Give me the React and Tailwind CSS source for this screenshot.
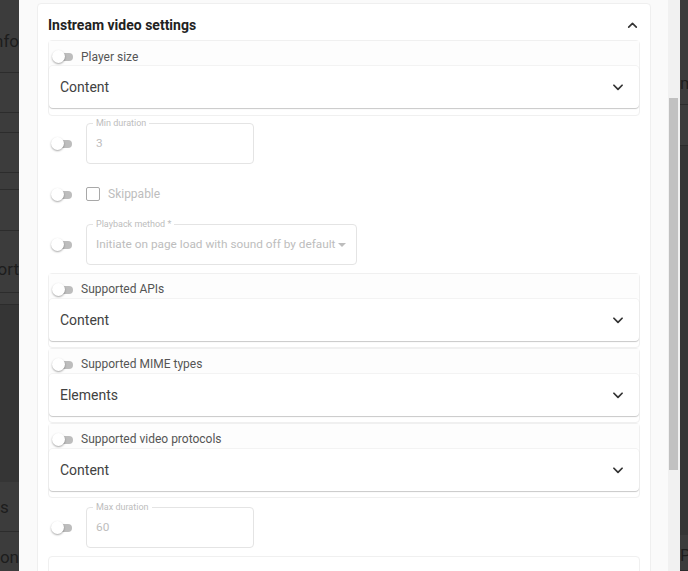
import React from 'react';

const font = { fontFamily: 'Roboto, "Liberation Sans", sans-serif' };

function Toggle() {
    return (
        <div className="relative w-[21px] h-[13px] shrink-0">
            <div className="absolute left-[3px] top-[3px] w-[18px] h-[8px] rounded-full bg-[#bdbdbd]"></div>
            <div className="absolute left-0 top-0 w-[13px] h-[13px] rounded-full bg-white shadow-[0_1px_2px_rgba(0,0,0,0.35)]"></div>
        </div>
    );
}

function ChevronDown() {
    return (
        <svg className="w-[14px] h-[14px] text-[#333]" viewBox="0 0 24 24" fill="none" stroke="currentColor" strokeWidth="3" strokeLinecap="round" strokeLinejoin="round">
            <path d="M5 9l7 7 7-7" />
        </svg>
    );
}

function SelectCard({ label, value, first }) {
    return (
        <div className={`rounded-[4px] border border-[#f0f0f0] bg-white ${first ? 'pb-[7px]' : 'pb-[6px]'}`}>
            <div className={`flex items-center gap-[8px] pl-[3px] bg-[#fdfdfd] ${first ? 'h-[24px] pt-[7px]' : 'h-[24px] pt-[6px]'}`}>
                <Toggle />
                <span className="text-[12px] text-[#555]">{label}</span>
            </div>
            <div className="h-[43px] flex items-center justify-between pl-[11px] pr-[14px] bg-white rounded-[4px] border-t border-[#f3f3f3] shadow-[0_1px_1px_rgba(0,0,0,0.22)]">
                <span className="text-[14px] text-[#424242]">{value}</span>
                <ChevronDown />
            </div>
        </div>
    );
}

function OutlinedField({ label, value, width, arrow }) {
    return (
        <div className={`relative h-[41px] rounded-[4px] border border-[#e4e4e4] flex items-center pl-[9px] pr-[9px] ${width}`}>
            <span className="absolute -top-[7px] left-[6px] bg-white px-[3px] text-[9px] text-[#bdbdbd] whitespace-nowrap">{label}</span>
            <span className="text-[11.8px] text-[#bdbdbd] flex-1 whitespace-nowrap">{value}</span>
            {arrow && (
                <svg className="w-[10px] h-[10px] text-[#bdbdbd] shrink-0" viewBox="0 0 10 10" fill="currentColor">
                    <path d="M1 3h8L5 7z" />
                </svg>
            )}
        </div>
    );
}

function SideRow({ text, h, pad = '', align = 'right' }) {
    return (
        <div className={`shrink-0 border-b border-[#2c2c2c] flex items-center ${h} ${pad} ${align === 'right' ? 'justify-end' : 'justify-start'}`}>
            {text && <span className="text-[17px] text-[#1d1d1d] whitespace-nowrap">{text}</span>}
        </div>
    );
}

export default function App() {
    return (
        <div className="w-[688px] h-[571px] overflow-hidden flex bg-[#3a3a3a]" style={font}>
            {/* dimmed page behind the drawer */}
            <div className="w-[19px] shrink-0 flex flex-col overflow-hidden bg-[#3c3c3c]">
                <SideRow text="nfo" h="h-[73px]" pad="pt-[12px]" />
                <SideRow h="h-[40px]" />
                <SideRow h="h-[20px]" />
                <SideRow h="h-[40px]" />
                <SideRow h="h-[17px]" />
                <SideRow h="h-[41px]" />
                <SideRow text="port" h="h-[62px]" pad="pt-[16px]" />
                <SideRow h="h-[12px]" />
                <div className="shrink-0 h-[177px] bg-[#353535]"></div>
                <SideRow text="s" h="h-[50px]" pad="pt-[2px]" align="left" />
                <SideRow text="con" h="h-[40px]" pad="pt-[12px]" />
            </div>

            {/* drawer */}
            <div className="flex-1 bg-[#fafafa] flex overflow-hidden">
                <div className="flex-1 pl-[18px] pr-[17px] pt-[3px]">
                    <div className="bg-white border border-[#efefef] rounded-[4px] px-[10px] pb-4">
                        <div className="h-[36px] pt-[6px] flex items-center justify-between">
                            <span className="text-[14px] font-bold text-[#222]">Instream video settings</span>
                            <svg className="w-[13px] h-[13px] text-[#333] mr-[1px]" viewBox="0 0 24 24" fill="none" stroke="currentColor" strokeWidth="3" strokeLinecap="round" strokeLinejoin="round">
                                <path d="M5 15l7-7 7 7" />
                            </svg>
                        </div>

                        <SelectCard label="Player size" value="Content" first />

                        <div className="mt-[7px] flex items-center gap-[14px] pl-[3px]">
                            <Toggle />
                            <OutlinedField label="Min duration" value="3" width="w-[168px]" />
                        </div>

                        <div className="h-[60px] flex items-center gap-[14px] pl-[3px]">
                            <Toggle />
                            <div className="flex items-center gap-[8px]">
                                <div className="w-[14px] h-[14px] border-[1.5px] border-[#a8a8a8] rounded-[2px]"></div>
                                <span className="text-[12px] text-[#bdbdbd]">Skippable</span>
                            </div>
                        </div>

                        <div className="flex items-center gap-[14px] pl-[3px]">
                            <Toggle />
                            <OutlinedField label="Playback method *" value="Initiate on page load with sound off by default" width="w-[271px]" arrow />
                        </div>

                        <div className="mt-[8px] flex flex-col">
                            <SelectCard label="Supported APIs" value="Content" />
                            <SelectCard label="Supported MIME types" value="Elements" />
                            <SelectCard label="Supported video protocols" value="Content" />
                        </div>

                        <div className="mt-[9px] flex items-center gap-[14px] pl-[3px]">
                            <Toggle />
                            <OutlinedField label="Max duration" value="60" width="w-[168px]" />
                        </div>

                        <div className="mt-[8px] h-[40px] rounded-[4px] border border-[#f0f0f0]"></div>
                    </div>
                </div>
                {/* scrollbar */}
                <div className="w-[12px] shrink-0 bg-[#f1f1f1] pt-[98px] pl-[1px]">
                    <div className="w-[9px] h-[372px] bg-[#c1c1c1]"></div>
                </div>
            </div>

            <div className="w-[8px] shrink-0 flex flex-col overflow-hidden bg-[#3c3c3c]">
                <div className="shrink-0 h-[64px]"></div>
                <SideRow text="m" h="h-[41px]" align="left" />
                <SideRow h="h-[41px]" />
                <div className="shrink-0 h-[389px] bg-[#353535]"></div>
                <SideRow text="Pr" h="h-[36px]" pad="pt-[6px]" align="left" />
            </div>
        </div>
    );
}
